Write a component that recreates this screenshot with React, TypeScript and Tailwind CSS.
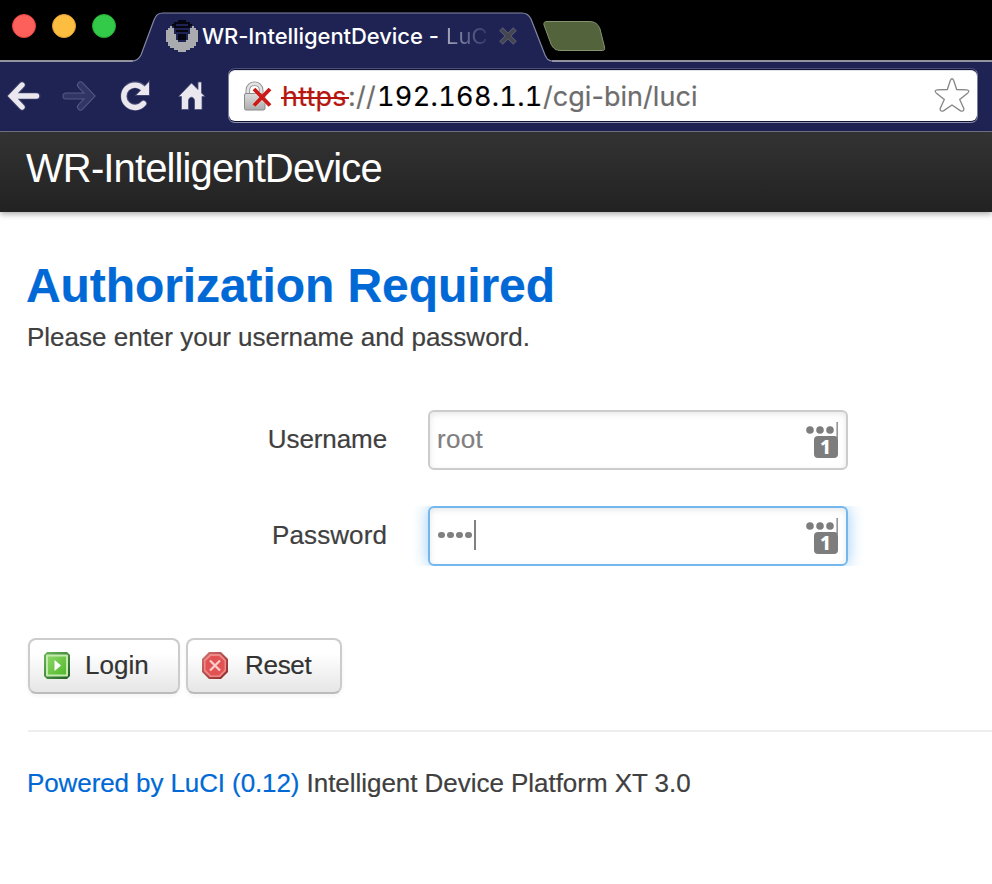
import React from "react";

const PIXELS = [
  "......####......",
  "....########....",
  "...##......##...",
  "..o.########.o..",
  ".ooo........ooo.",
  "oooo.######.oooo",
  "oooo........oooo",
  "ooooo.####.ooooo",
  "ooooo.####.ooooo",
  "ooooo.####.ooooo",
  "oooooo....oooooo",
  ".oooooooooooooo.",
  ".oooooooooooooo.",
  "..oooooooooooo..",
  "....oooooooo....",
  "......oooo......",
];

function Favicon() {
  return (
    <svg width="32" height="32" viewBox="0 0 16 16" shapeRendering="crispEdges" className="shrink-0">
      {PIXELS.map((row, y) =>
        row.split("").map((c, x) =>
          c === "." ? null : (
            <rect key={`${x}-${y}`} x={x} y={y} width="1" height="1" fill={c === "#" ? "#05060f" : "#a9abae"} />
          )
        )
      )}
    </svg>
  );
}

function TabStrip() {
  return (
    <div className="relative flex h-[62px] bg-black">
      <svg className="absolute left-0 top-0" width="992" height="62" viewBox="0 0 992 62" fill="none">
        <path
          d="M0 61H132C137 61 139 59 141 55L154 20C156 15 158 13 163 13H522C527 13 529 15 531 19L545 55C547 59 548 61 553 61H992V64H0Z"
          fill="#1e2354"
        />
        <path d="M0 61H133M552 61H992" stroke="#9292a0" strokeWidth="2" />
        <path
          d="M132 61C137 61 139 59 141 55L154 20C156 15 158 13 163 13H522C527 13 529 15 531 19L545 55C547 59 548 61 553 61"
          stroke="#8588a5"
          strokeWidth="1.2"
        />
        <path
          d="M547 21.5H589C595 21.5 598 24 600 29L604.5 47C605 49.500 604.500 50.500 602.500 50.500H561C556 50.500 553 48.500 551 44L544 25C543.500 22.500 544.500 21.500 547 21.500Z"
          fill="#53633c"
          stroke="#87936f"
        />
      </svg>
      <div className="relative flex w-[166px] shrink-0 gap-4 pl-3 pt-[14px]">
        <span className="h-6 w-6 rounded-full border border-[#e2443f] bg-[#fd5f5b]" />
        <span className="h-6 w-6 rounded-full border border-[#dfa033] bg-[#fdbd41]" />
        <span className="h-6 w-6 rounded-full border border-[#24ad33] bg-[#33c949]" />
      </div>
      <div className="relative flex h-8 pt-5">
        <Favicon />
        <div className="ml-[4px] flex h-8 items-center whitespace-pre font-['Inter',sans-serif] text-[22px] leading-8 text-white">
          <span className="w-[244px] font-medium tracking-[-0.060px]">WR-IntelligentDevice -</span>
          <span className="bg-linear-to-r from-[#a5a7bb] to-[#2e3363] bg-clip-text text-transparent">LuC</span>
        </div>
        <svg className="ml-[10px] mt-[6px]" width="20" height="20" viewBox="0 0 20 20">
          <path d="M3 3L17 17M17 3L3 17" stroke="#5d607e" strokeWidth="5" />
          <path d="M3.500 3.500L16.500 16.500M16.500 3.500L3.500 16.500" stroke="#45464f" strokeWidth="3.500" />
        </svg>
      </div>
    </div>
  );
}

function NavIcons() {
  return (
    <svg width="228" height="69" viewBox="0 62 228 69" fill="none" className="shrink-0">
      <g strokeLinecap="round" strokeLinejoin="miter">
        <path d="M22 85L11.500 96L22 107M13 96H37" stroke="#3e426c" strokeWidth="7" />
        <path d="M22 85L11.500 96L22 107M13 96H36.500" stroke="#ebe7ef" strokeWidth="5.400" />
        <path d="M80.500 85L91 96L80.500 107M90 96H66" stroke="#555983" strokeWidth="7" />
        <path d="M80.500 85L91 96L80.500 107M90 96H66" stroke="#303565" strokeWidth="5" />
        <path d="M143.500 103.500A11.200 11.200 0 1 1 143 88" stroke="#4b4f77" strokeWidth="7" />
        <path d="M149 82V95H136.500Z" fill="#ebe7ef" stroke="#4b4f77" strokeWidth="1.600" />
        <path d="M143.500 103.500A11.200 11.200 0 1 1 143 88.500" stroke="#ebe7ef" strokeWidth="5.400" />
        <path d="M149 82V95H136.500Z" fill="#ebe7ef" />
      </g>
      <path
        d="M191.500 83L198 89.500V82H201.500V93L205 96.500H202V109.500H194.500V101C194.500 96 188.500 96 188.500 101V109.500H181.500V96.500H178.500Z"
        fill="#ebe7ef"
        stroke="#4b4f77"
        strokeWidth=".8"
      />
    </svg>
  );
}

function BrokenLock() {
  return (
    <svg width="30" height="32" viewBox="0 0 30 32" fill="none" className="shrink-0">
      <defs>
        <linearGradient id="lock" x1="0" y1="0" x2="0" y2="1">
          <stop stopColor="#dcdcdc" />
          <stop offset="1" stopColor="#acacac" />
        </linearGradient>
      </defs>
      <path d="M4.800 14V9.500C4.800 .500 18.200 .500 18.200 9.500V14" stroke="#8f8f8f" strokeWidth="4.600" />
      <path d="M4.800 14V9.500C4.800 .500 18.200 .500 18.200 9.500V14" stroke="#e2e2e2" strokeWidth="2.800" />
      <rect x="1.500" y="12.500" width="20.500" height="16.500" rx="1.500" fill="url(#lock)" stroke="#8a8a8a" />
      <path d="M11 8L27 24.500M27 8L11 24.500" stroke="#fff" strokeWidth="5" opacity=".4" />
      <path d="M11 8L27 24.500M27 8L11 24.500" stroke="#cb1b18" strokeWidth="3.900" />
    </svg>
  );
}

function Toolbar() {
  return (
    <div className="flex h-[70px] border-b border-[#74768a] bg-[#1e2354]">
      <NavIcons />
      <div className="mt-[6px] flex h-[55px] w-[750px] items-start rounded-[7px] border border-t-[#4b4f77] border-x-[#7c80a0] border-b-[#9093ae] bg-[#101436] pt-px">
        <div className="flex h-[51px] w-full rounded-[6px] border-t border-[#e2e2e6] bg-white">
          <div className="ml-[14px] mt-[10px] w-[39px]">
            <BrokenLock />
          </div>
          <div className="flex whitespace-pre pt-[6px] font-['Inter',sans-serif] text-[27px] leading-[40px] text-[#6d6d6d] [-webkit-text-stroke:0.200px_currentColor]">
            <span className="relative w-[66px] tracking-[0.200px] text-[#b5170f]">
              https
              <span className="absolute -left-px top-[20px] h-[2px] w-[68px] bg-[#b5170f]" />
            </span>
            <span className="w-[29px] tracking-[0.200px]">://</span>
            <span className="w-[166px] tabular-nums tracking-[0.350px] text-black">192.168.1.1</span>
            <span className="tracking-[0.050px]">/cgi-bin/luci</span>
          </div>
          <svg className="ml-auto mr-[6px] mt-[5px]" width="38" height="38" viewBox="0 0 38 38" fill="none">
            <path
              d="M17.300 4.500Q19 1 20.700 4.500L23.700 13.500L33.800 13.800Q37.500 14.500 34.500 17.200L26.700 23.500L30.800 32.500Q31.200 36 27.500 34.800L19 29L10.500 34.800Q6.800 36 7.200 32.500L11.300 23.500L3.500 17.200Q.500 14.500 4.200 13.800L14.300 13.500Z"
              stroke="#858585"
              strokeWidth="1.300"
            />
          </svg>
        </div>
      </div>
    </div>
  );
}

function ManagerBadge() {
  return (
    <svg width="34" height="38" viewBox="0 0 34 38" className="ml-auto shrink-0">
      <circle cx="5" cy="9" r="3.800" fill="#7d7d7d" />
      <circle cx="15" cy="9" r="3.800" fill="#7d7d7d" />
      <circle cx="25" cy="9" r="3.800" fill="#7d7d7d" />
      <rect x="31.500" y="1" width="1.300" height="16" fill="#7d7d7d" />
      <rect x="9" y="15" width="24" height="22" rx="4" fill="#7d7d7d" />
      <text x="20.500" y="33" textAnchor="middle" fill="#fff" className="font-['Noto_Sans',sans-serif] text-[19px] font-extrabold">
        1
      </text>
    </svg>
  );
}

function Field({ label, focused, children }: { label: string; focused?: boolean; children: React.ReactNode }) {
  return (
    <div className="flex h-[60px] items-center">
      <div className={"w-[387px] pb-[2px] text-right " + (focused ? "tracking-[0.100px]" : "tracking-[-0.100px]")}>
        {label}
      </div>
      <div className="ml-[25px] flex h-[60px] overflow-hidden px-4">
        <div
          className={
            "flex h-[60px] w-[420px] items-center rounded-[6px] border-2 pl-[7px] pr-[7px] text-[#808080] " +
            (focused
              ? "border-[#73b7ef] shadow-[inset_0_2px_6px_rgba(0,0,0,0.1),0_0_16px_rgba(82,168,236,0.6)]"
              : "border-[#ccc] shadow-[inset_0_2px_6px_rgba(0,0,0,0.1)]")
          }
        >
          {children}
          <ManagerBadge />
        </div>
      </div>
    </div>
  );
}

function LoginIcon() {
  return (
    <svg width="28" height="28" viewBox="0 0 28 28">
      <defs>
        <linearGradient id="go" x1="0" y1="0" x2="1" y2="1">
          <stop stopColor="#6db75a" />
          <stop offset="1" stopColor="#1f5f22" />
        </linearGradient>
        <linearGradient id="goFace" x1="0" y1="0" x2="1" y2="1">
          <stop stopColor="#8bd566" />
          <stop offset="1" stopColor="#52b92c" />
        </linearGradient>
      </defs>
      <path d="M4 0H24L27 3V24L24 27H4L1 24V3Z" fill="url(#go)" />
      <rect x="3" y="2.500" width="22" height="22" rx="1" fill="#c5eab0" />
      <rect x="5" y="4.500" width="18" height="18" fill="url(#goFace)" />
      <path d="M11.500 8L18 13.500L11.500 19Z" fill="#fff" />
    </svg>
  );
}

function ResetIcon() {
  return (
    <svg width="28" height="28" viewBox="0 0 28 28">
      <defs>
        <linearGradient id="stop" x1="0" y1="0" x2="1" y2="1">
          <stop stopColor="#d07470" />
          <stop offset="1" stopColor="#8f2727" />
        </linearGradient>
      </defs>
      <path d="M8 0H20L27 7V20L20 27H8L1 20V7Z" fill="url(#stop)" />
      <path d="M9 2H19L25 8V19L19 25H9L3 19V8Z" fill="#ee8a8a" />
      <path d="M10 4H18L23.500 9V18L18 23.500H10L4.500 18V9Z" fill="#e25252" />
      <path d="M9 8.500L19 18.500M19 8.500L9 18.500" stroke="#f9cfcf" strokeWidth="2.200" />
    </svg>
  );
}

const BUTTON =
  "flex h-14 items-center rounded-[8px] border-2 border-[#ccc] border-b-[#bbb] bg-linear-to-b from-white from-25% to-[#e6e6e6] pl-[13px] text-[#333] shadow-[0_2px_4px_rgba(0,0,0,0.05)]";

export default function App() {
  return (
    <div className="h-[884px] w-[992px] overflow-hidden bg-white font-['Liberation_Sans',Arial,sans-serif] text-[26px] leading-9 text-[#404040]">
      <TabStrip />
      <Toolbar />
      <header className="flex h-[80px] bg-linear-to-b from-[#333] to-[#222] pl-[26px] pt-3 shadow-[0_2px_6px_rgba(0,0,0,0.35)]">
        <span className="whitespace-nowrap text-[40px] leading-[48px] tracking-[-0.880px] text-white">
          WR-IntelligentDevice
        </span>
      </header>
      <main className="pt-[40px] [-webkit-text-stroke:0.200px_currentColor]">
        <h1 className="pl-[26px] text-[48px] font-bold leading-[68px] tracking-[-0.080px] text-[#0069d6]">
          Authorization Required
        </h1>
        <p className="-mt-px pl-[27px]">Please enter your username and password.</p>
        <form className="pt-[55px]">
          <div className="flex flex-col gap-9">
            <Field label="Username">
              <span className="pb-[2px] tracking-[0.300px]">root</span>
            </Field>
            <Field label="Password" focused>
              <span className="flex items-center gap-[2.500px] pb-[2px] pl-[1px]">
                <i className="h-[6.500px] w-[6.500px] rounded-full bg-[#808080]" />
                <i className="h-[6.500px] w-[6.500px] rounded-full bg-[#808080]" />
                <i className="h-[6.500px] w-[6.500px] rounded-full bg-[#808080]" />
                <i className="h-[6.500px] w-[6.500px] rounded-full bg-[#808080]" />
                <i className="h-[30px] w-[2px] bg-[#808080]" />
              </span>
            </Field>
          </div>
          <div className="mt-[72px] flex gap-[6px] pl-7">
            <button type="button" className={BUTTON + " w-[152px]"}>
              <LoginIcon />
              <span className="ml-[14px] pb-[2px]">Login</span>
            </button>
            <button type="button" className={BUTTON + " w-[156px]"}>
              <ResetIcon />
              <span className="ml-[16px] pb-[2px] tracking-[-0.300px]">Reset</span>
            </button>
          </div>
        </form>
        <footer className="ml-7 mt-9 border-t-2 border-[#eee] pt-[33px]">
          <p className="-ml-px whitespace-pre tracking-[-0.040px]">
            <a className="tracking-[-0.100px] text-[#0069d6]">Powered by LuCI (0.12)</a> Intelligent Device Platform XT 3.0
          </p>
        </footer>
      </main>
    </div>
  );
}
